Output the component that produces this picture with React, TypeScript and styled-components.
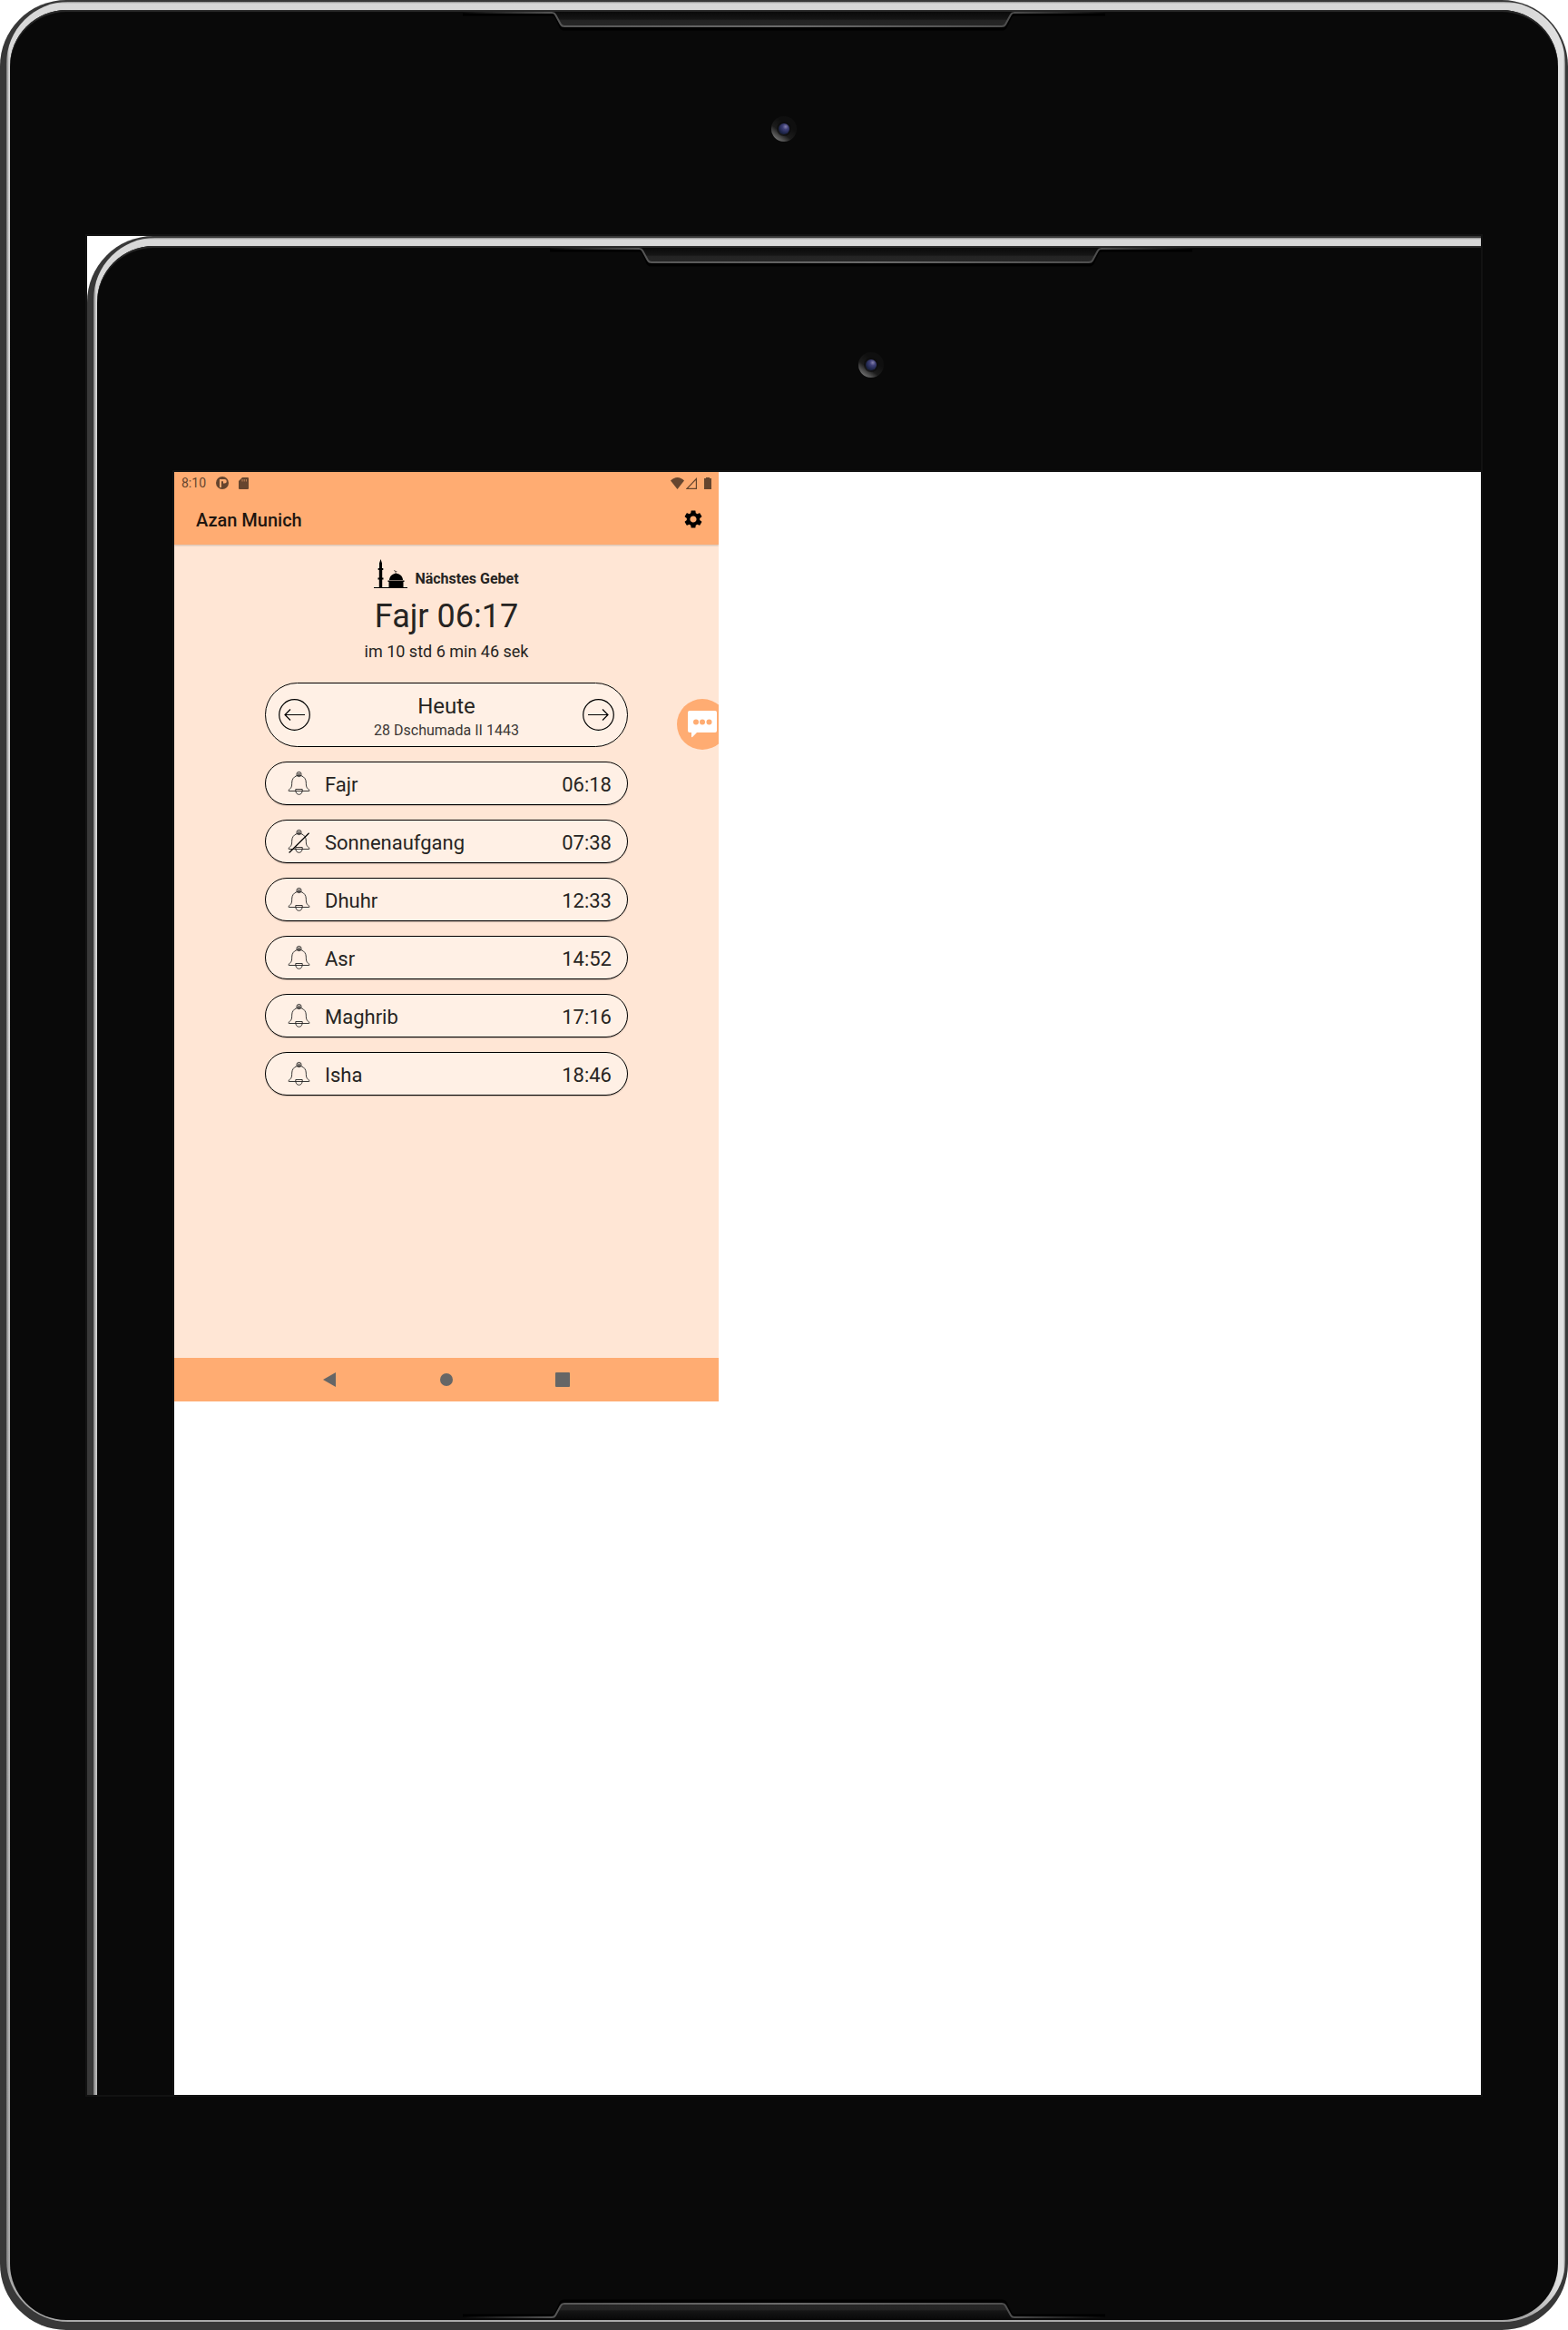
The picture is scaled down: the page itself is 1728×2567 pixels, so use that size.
import React from "react";
import styled, { createGlobalStyle } from "styled-components";

const GlobalStyle = createGlobalStyle`
  *, *::before, *::after { box-sizing: border-box; }
  body {
    margin: 0;
    background: #ffffff;
    color: #262422;
    font-family: Roboto, "Noto Sans", sans-serif;
    overflow-x: hidden;
  }
  h1, h2, p, ul { margin: 0; padding: 0; font-weight: 400; }
  button { margin: 0; padding: 0; border: 0; background: none; color: inherit; font: inherit; cursor: pointer; }
  svg { display: block; }
`;

/* ---------- tablet ---------- */

const Shell = styled.div<{ $nested?: boolean }>`
  width: ${(p) => (p.$nested ? "calc(100% + 192px)" : "100%")};
  padding: 2px 3px 9px 7px;
  border-radius: 73px;
  background: #383838;
`;

const Rim = styled.div`
  padding: 9px 8px 2px 4px;
  border-radius: 68px;
  background:
    linear-gradient(90deg, #777777 0, transparent 3px),
    linear-gradient(270deg, #777777 0, transparent 2px),
    linear-gradient(180deg, #8a8a8a 0, transparent 2px),
    linear-gradient(270deg, #e0e0e0 0, #e0e0e0 7px, transparent 40px),
    linear-gradient(180deg, #d8d8d8 0, #dedede 40%, #a8a8a8 100%);
`;

const Face = styled.div`
  position: relative;
  padding: 249px 85px 248px;
  border-radius: 62px;
  background: #090909;
  box-shadow: inset 0 2px 1px #2c2c2c;
`;

const Screen = styled.div`
  aspect-ratio: 3 / 4;
  overflow: hidden;
  background: #ffffff;
  box-shadow: 0 0 0 2px #121212;
`;

const Grille = styled.svg<{ $bottom?: boolean }>`
  position: absolute;
  left: 50%;
  ${(p) => (p.$bottom ? "bottom: 0;" : "top: 0;")}
  transform: translateX(-50%) ${(p) => (p.$bottom ? "scaleY(-1)" : "")};
`;

const Camera = styled.svg`
  position: absolute;
  left: 50%;
  top: 117px;
  transform: translateX(-50%);
`;

function Speaker({ id, bottom }: { id: string; bottom?: boolean }) {
  return (
    <Grille $bottom={bottom} width="708" height="24" viewBox="0 0 708 24" aria-hidden="true">
      <defs>
        <linearGradient id={`${id}-edge`} x1="0" x2="1">
          <stop offset="0" stopColor="#555" stopOpacity="0" />
          <stop offset="0.14" stopColor="#555" />
          <stop offset="0.5" stopColor="#6a6a6a" />
          <stop offset="0.86" stopColor="#4c4c4c" />
          <stop offset="1" stopColor="#444" stopOpacity="0" />
        </linearGradient>
        <linearGradient id={`${id}-fill`} x1="0" x2="0" y1="0" y2="1">
          <stop offset="0" stopColor="#0a0a0a" />
          <stop offset="0.5" stopColor="#151515" />
          <stop offset="0.6" stopColor="#242424" />
          <stop offset="1" stopColor="#262626" />
        </linearGradient>
      </defs>
      <path d="M0 5H99Q102 5 103 8L108 19Q109 21 112 21H594Q597 21 598 19L604 7Q605 5 608 5H708" fill="none" stroke="#000" strokeWidth="3" />
      <path d="M98 2Q101 2 102 5L108 16Q109 18 112 18H594Q597 18 598 16L604 4Q605 2 608 2Z" fill={`url(#${id}-fill)`} />
      <path d="M0 3H98Q101 3 102 5L108 16Q109 18 112 18H594Q597 18 598 16L604 5Q605 3 608 3H708" fill="none" stroke={`url(#${id}-edge)`} strokeWidth="2" />
    </Grille>
  );
}

function Lens({ id }: { id: string }) {
  return (
    <Camera width="28" height="28" viewBox="0 0 28 28" aria-hidden="true">
      <defs>
        <linearGradient id={`${id}-ring`} x1="0.2" y1="0.95" x2="0.65" y2="0.35">
          <stop offset="0" stopColor="#777" />
          <stop offset="0.5" stopColor="#1c1c1c" />
          <stop offset="1" stopColor="#0f0f0f" />
        </linearGradient>
        <radialGradient id={`${id}-glass`} cx="0.65" cy="0.3" r="0.65">
          <stop offset="0" stopColor="#8580ac" />
          <stop offset="0.4" stopColor="#3f4077" />
          <stop offset="1" stopColor="#1a2244" />
        </radialGradient>
      </defs>
      <circle cx="14" cy="14" r="14" fill={`url(#${id}-ring)`} />
      <circle cx="14" cy="14" r="8" fill="#0b0b0d" fillOpacity="0.6" />
      <circle cx="14" cy="14" r="6" fill={`url(#${id}-glass)`} />
    </Camera>
  );
}

function Tablet({ id, nested, children }: { id: string; nested?: boolean; children: React.ReactNode }) {
  return (
    <Shell $nested={nested}>
      <Rim>
        <Face>
          <Speaker id={`${id}-top`} />
          <Lens id={id} />
          <Screen>{children}</Screen>
          <Speaker id={`${id}-bottom`} bottom />
        </Face>
      </Rim>
    </Shell>
  );
}

/* ---------- app ---------- */

const Phone = styled.div`
  display: flex;
  flex-direction: column;
  position: relative;
  width: 600px;
  max-width: 100%;
  min-height: 1024px;
  overflow: hidden;
  background: #ffe6d5;
`;

const Header = styled.header`
  background: #ffac72;
  box-shadow: 0 1px 2px rgba(0, 0, 0, 0.2);
`;

const StatusBar = styled.div`
  display: flex;
  align-items: center;
  justify-content: space-between;
  height: 24px;
  padding: 0 8px;
  color: #66452e;
  font-size: 14px;
  line-height: 24px;
`;

const StatusGroup = styled.div<{ $gap: number }>`
  display: flex;
  align-items: center;
  gap: ${(p) => p.$gap}px;
`;

const Toolbar = styled.div`
  display: flex;
  align-items: center;
  justify-content: space-between;
  height: 56px;
  padding: 0 16px 0 24px;
`;

const Title = styled.h1`
  padding-top: 2px;
  color: #1f1610;
  font-size: 20px;
  font-weight: 500;
  line-height: 24px;
`;

const Main = styled.main`
  display: flex;
  flex: 1;
  flex-direction: column;
  align-items: center;
  padding-top: 16px;
`;

const NextPrayer = styled.div`
  display: flex;
  align-items: flex-end;
  gap: 8px;
  height: 32px;
`;

const NextLabel = styled.h2`
  font-size: 16px;
  font-weight: 700;
  line-height: 20px;
`;

const NextTime = styled.p`
  margin-top: 9px;
  font-size: 36px;
  line-height: 44px;
`;

const Countdown = styled.p`
  margin-top: 5px;
  font-size: 18px;
  line-height: 24px;
`;

const DayCard = styled.section`
  display: flex;
  align-items: center;
  justify-content: space-between;
  width: 400px;
  height: 71px;
  margin-top: 22px;
  padding: 0 14px;
  border: 1px solid #000000;
  border-radius: 36px;
  background: #fff0e5;
`;

const Day = styled.div`
  padding-top: 5px;
  text-align: center;
`;

const DayName = styled.p`
  font-size: 24px;
  line-height: 28px;
`;

const DayDate = styled.p`
  margin-top: 1px;
  color: #3c3835;
  font-size: 16px;
  line-height: 24px;
`;

const PrayerList = styled.ul`
  display: flex;
  flex-direction: column;
  gap: 16px;
  width: 400px;
  margin-top: 16px;
  list-style: none;
`;

const PrayerRow = styled.li`
  display: flex;
  align-items: center;
  height: 48px;
  padding: 0 17px 0 24px;
  border: 1px solid #000000;
  border-radius: 24px;
  background: #fff0e5;
  box-shadow: 0 1px 1px rgba(0, 0, 0, 0.2);
  font-size: 22px;
  line-height: 28px;
`;

const PrayerName = styled.span`
  flex: 1;
  padding: 4px 0 0 16px;
`;

const PrayerTime = styled.time`
  padding-top: 4px;
`;

const ChatButton = styled.button`
  position: absolute;
  top: 250px;
  right: -10px;
  display: grid;
  place-items: center;
  width: 56px;
  height: 56px;
  border-radius: 50%;
  background: #ffac72;
`;

const NavBar = styled.nav`
  display: flex;
  align-items: center;
  justify-content: center;
  gap: 104px;
  height: 48px;
  background: #ffac72;
`;

function ArrowIcon({ back }: { back?: boolean }) {
  return (
    <svg width="35" height="35" viewBox="0 0 35 35" fill="none" stroke="#000" strokeWidth="1.2">
      <circle cx="17.5" cy="17.5" r="16.8" />
      <path d={back ? "M29 17.5H7M13 11.5L7 17.5L13 23.5" : "M6 17.5H28M22 11.5L28 17.5L22 23.5"} />
    </svg>
  );
}

function BellIcon({ muted }: { muted?: boolean }) {
  return (
    <svg width="25" height="28" viewBox="0 0 25 28" fill="none" stroke="#222" strokeWidth="0.9">
      <circle cx="12.5" cy="4" r="2.6" />
      <circle cx="12.5" cy="4" r="1" />
      <path d="M10 5.6C6.5 7 4.8 9.6 4.7 13C4.6 18 4.400 18.600 1 21.600Q0.600 22.500 1.600 22.500H23.400Q24.400 22.500 24 21.600C20.600 18.600 20.400 18 20.300 13C20.200 9.600 18.500 7 15 5.600Z" />
      <path d="M8.800 20.500H16.200V22.500C15.800 25.100 14.400 26.300 12.500 26.300S9.200 25.100 8.800 22.500Z" />
      {muted && <path d="M1.600 26.500L23.600 4.700" stroke="#000" strokeWidth="1.200" />}
    </svg>
  );
}

function MosqueIcon() {
  return (
    <svg width="37" height="32" viewBox="0 0 37 32" fill="#000" aria-hidden="true">
      <path d="M0 31H37V32H0Z" />
      <path d="M7.500 0L9 4.500V10H10.300V12H9.200V20.500H10.500V22.500H9.200V31H5.800V22.500H4.500V20.500H5.800V12H4.700V10H6V4.500Z" />
      <path d="M17 23C17.300 19 20 16.300 24.500 15.800C29 16.300 31.700 19 32 23Z" />
      <path d="M15.500 23.500H33.500V25H32.500V31H16.500V25H15.500Z" />
      <path d="M24.500 16.500L23.800 14.500M22.600 12Q22.800 14.500 25.400 13.700" fill="none" stroke="#000" strokeWidth="0.7" />
    </svg>
  );
}

const prayers = [
  { name: "Fajr", time: "06:18" },
  { name: "Sonnenaufgang", time: "07:38", muted: true },
  { name: "Dhuhr", time: "12:33" },
  { name: "Asr", time: "14:52" },
  { name: "Maghrib", time: "17:16" },
  { name: "Isha", time: "18:46" },
];

function PrayerApp() {
  return (
    <Phone>
      <Header>
        <StatusBar>
          <StatusGroup $gap={11}>
            <span>8:10</span>
            <svg width="14" height="14" viewBox="0 0 14 14" aria-hidden="true">
              <circle cx="7" cy="7" r="7" fill="#66452e" />
              <path d="M4 3H9.500A2.200 2.200 0 0 1 9.500 7.600H8V5.300H6V12H4Z" fill="#ffac72" />
            </svg>
            <svg width="11" height="13" viewBox="0 0 11 13" aria-hidden="true">
              <path d="M4 0H10Q11 0 11 1V12Q11 13 10 13H1Q0 13 0 12V4Z" fill="#66452e" />
              <path d="M4 2V4.500M6.200 2V4.500M8.400 2V4.500" stroke="#ffac72" strokeWidth="0.6" />
            </svg>
          </StatusGroup>
          <StatusGroup $gap={2}>
            <svg width="15" height="13" viewBox="0 0 15 13" aria-hidden="true">
              <path d="M7.500 13L0 3.500Q3.500 0 7.500 0T15 3.500Z" fill="#66452e" />
            </svg>
            <svg width="12" height="13" viewBox="0 0 12 13" aria-hidden="true">
              <path d="M11.400 1.500V12.400H1Z" fill="none" stroke="#66452e" strokeWidth="1.200" />
            </svg>
            <svg width="14" height="13" viewBox="0 0 14 13" aria-hidden="true">
              <path d="M8 0H12V1H14V13H6V1H8Z" fill="#66452e" />
            </svg>
          </StatusGroup>
        </StatusBar>
        <Toolbar>
          <Title>Azan Munich</Title>
          <button type="button" aria-label="Einstellungen">
            <svg width="24" height="24" viewBox="0 0 24 24" fill="#000">
              <path d="M19.140 12.940c.04-.3.060-.61.060-.94 0-.32-.02-.64-.07-.94l2.030-1.580c.18-.14.230-.41.120-.61l-1.920-3.320c-.12-.22-.37-.29-.59-.22l-2.390.96c-.5-.38-1.030-.7-1.620-.94L14.400 2.810c-.04-.24-.24-.41-.48-.41h-3.840c-.24 0-.43.17-.47.41l-.36 2.540c-.59.24-1.130.57-1.620.94l-2.390-.96c-.22-.08-.47 0-.59.22L2.740 8.870c-.12.21-.08.470.12.610l2.030 1.580c-.05.3-.09.630-.09.940s.02.640.070.940l-2.030 1.580c-.18.14-.23.410-.12.610l1.920 3.320c.12.220.37.290.59.220l2.390-.96c.5.380 1.030.700 1.620.940l.36 2.540c.05.240.24.410.48.410h3.840c.24 0 .44-.17.470-.41l.36-2.540c.59-.24 1.130-.56 1.620-.94l2.390.96c.22.080.47 0 .59-.22l1.920-3.320c.12-.22.070-.47-.12-.61l-2.010-1.580zM12 15.600c-1.980 0-3.600-1.620-3.600-3.600s1.620-3.600 3.600-3.600 3.600 1.620 3.600 3.600-1.620 3.600-3.600 3.600z" />
            </svg>
          </button>
        </Toolbar>
      </Header>
      <Main>
        <NextPrayer>
          <MosqueIcon />
          <NextLabel>Nächstes Gebet</NextLabel>
        </NextPrayer>
        <NextTime>Fajr 06:17</NextTime>
        <Countdown>im 10 std 6 min 46 sek</Countdown>
        <DayCard>
          <button type="button" aria-label="Vorheriger Tag">
            <ArrowIcon back />
          </button>
          <Day>
            <DayName>Heute</DayName>
            <DayDate>28 Dschumada II 1443</DayDate>
          </Day>
          <button type="button" aria-label="Nächster Tag">
            <ArrowIcon />
          </button>
        </DayCard>
        <PrayerList>
          {prayers.map((p) => (
            <PrayerRow key={p.name}>
              <button type="button" aria-label={`${p.name} Benachrichtigung`}>
                <BellIcon muted={p.muted} />
              </button>
              <PrayerName>{p.name}</PrayerName>
              <PrayerTime>{p.time}</PrayerTime>
            </PrayerRow>
          ))}
        </PrayerList>
      </Main>
      <ChatButton type="button" aria-label="Nachricht">
        <svg width="32" height="30" viewBox="0 0 32 30">
          <path d="M2 0H30Q32 0 32 2V22Q32 24 30 24H10L5 29Q4 30 4 28V24H2Q0 24 0 22V2Q0 0 2 0Z" fill="#fff" />
          <g fill="#ffac72">
            <circle cx="9" cy="12.500" r="3" />
            <circle cx="16" cy="12.500" r="3" />
            <circle cx="23.500" cy="12.500" r="3" />
          </g>
        </svg>
      </ChatButton>
      <NavBar>
        <button type="button" aria-label="Zurück">
          <svg width="24" height="24" viewBox="0 0 24 24"><path d="M4 12L18 4V20Z" fill="#666" /></svg>
        </button>
        <button type="button" aria-label="Startbildschirm">
          <svg width="24" height="24" viewBox="0 0 24 24"><circle cx="12" cy="12" r="7" fill="#666" /></svg>
        </button>
        <button type="button" aria-label="Übersicht">
          <svg width="24" height="24" viewBox="0 0 24 24"><rect x="4" y="4" width="16" height="16" rx="1" fill="#666" /></svg>
        </button>
      </NavBar>
    </Phone>
  );
}

export default function App() {
  return (
    <>
      <GlobalStyle />
      <Tablet id="outer">
        <Tablet id="inner" nested>
          <PrayerApp />
        </Tablet>
      </Tablet>
    </>
  );
}
